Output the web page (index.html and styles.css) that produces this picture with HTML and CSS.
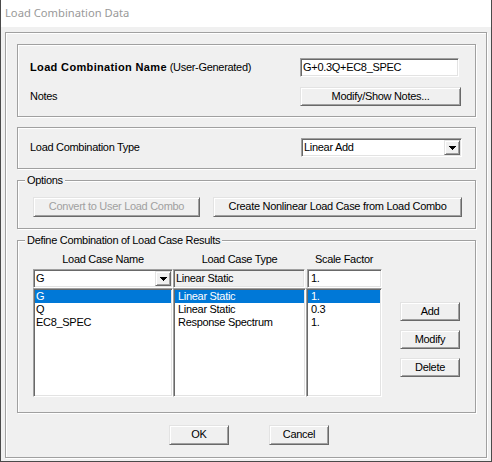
FILE: index.html
```html
<!DOCTYPE html>
<html>
<head>
<meta charset="utf-8">
<title>Load Combination Data</title>
<link rel="stylesheet" href="styles.css">
</head>
<body>
<div class="window">
  <div class="titlebar">Load Combination Data</div>
  <div class="client">
    <div class="frame">
      <div class="box box-name">
        <div class="label"><b class="strong">Load Combination Name</b> (User-Generated)</div>
        <div class="textbox tb-name">G+0.3Q+EC8_SPEC</div>
        <div class="label">Notes</div>
        <div class="btn btn-notes">Modify/Show Notes...</div>
      </div>
      <div class="box box-type">
        <div class="label">Load Combination Type</div>
        <div class="combo combo-type">
          <span class="combo-text">Linear Add</span>
          <span class="drop"><svg width="7" height="4" viewBox="0 0 7 4"><polygon points="0,0 7,0 3.5,4" fill="#000"/></svg></span>
        </div>
      </div>
      <div class="group group-options">
        <div class="group-title">Options</div>
        <div class="options-row">
          <div class="btn btn-convert disabled">Convert to User Load Combo</div>
          <div class="btn btn-create">Create Nonlinear Load Case from Load Combo</div>
        </div>
      </div>
      <div class="group group-define">
        <div class="group-title">Define Combination of Load Case Results</div>
        <div class="define-grid">
          <div class="hdr">Load Case Name</div>
          <div class="hdr">Load Case Type</div>
          <div class="hdr">Scale Factor</div>
          <div></div>

          <div class="combo combo-case">
            <span class="combo-text">G</span>
            <span class="drop"><svg width="7" height="4" viewBox="0 0 7 4"><polygon points="0,0 7,0 3.5,4" fill="#000"/></svg></span>
          </div>
          <div class="textbox readonly">Linear Static</div>
          <div class="textbox tb-scale">1.</div>
          <div></div>

          <div class="list list-name">
            <div class="item sel">G</div>
            <div class="item">Q</div>
            <div class="item">EC8_SPEC</div>
          </div>
          <div class="list list-type">
            <div class="item sel">Linear Static</div>
            <div class="item">Linear Static</div>
            <div class="item">Response Spectrum</div>
          </div>
          <div class="list list-scale">
            <div class="item sel">1.</div>
            <div class="item">0.3</div>
            <div class="item">1.</div>
          </div>
          <div class="side-buttons">
            <div class="btn btn-side">Add</div>
            <div class="btn btn-side">Modify</div>
            <div class="btn btn-side">Delete</div>
          </div>
        </div>
      </div>
      <div class="footer">
        <div class="btn btn-foot">OK</div>
        <div class="btn btn-foot">Cancel</div>
      </div>
    </div>
  </div>
</div>
</body>
</html>
```
FILE: styles.css
```css
* { box-sizing: border-box; }
html, body { margin: 0; padding: 0; }
body {
  width: 492px;
  height: 462px;
  overflow: hidden;
  background: #f0f0f0;
  font-family: "Liberation Sans", Arial, sans-serif;
  font-size: 11px;
  line-height: 13px;
  letter-spacing: -0.3px;
  color: #000;
}
.window {
  width: 492px;
  height: 462px;
  background: #f0f0f0;
  border: 1px solid #4a4a4a;
  border-top: none;
  display: flex;
  flex-direction: column;
}
.titlebar {
  height: 27px;
  flex: none;
  background: #fff;
  color: #999;
  font-family: "Noto Sans", "Open Sans", sans-serif;
  font-size: 11.2px;
  letter-spacing: 0;
  line-height: 25px;
  padding-left: 4px;
}
.client {
  flex: 1;
  padding: 5px 4px 3px 4px;
}
.frame {
  height: 100%;
  border: 1px solid #a0a0a0;
  box-shadow: inset 1px 1px #fff, 1px 1px #fff;
  padding: 11px 10px 0 11px;
  display: flex;
  flex-direction: column;
}

/* etched boxes */
.box, .group {
  border: 1px solid #a0a0a0;
  box-shadow: inset 1px 1px #fff, 1px 1px #fff;
}
.box-name {
  display: grid;
  grid-template-columns: 270px 161px;
  grid-template-rows: 19px 19px;
  row-gap: 10px;
  align-items: center;
  padding: 13px 0 10px 12px;
}
.box-type {
  margin-top: 10px;
  display: grid;
  grid-template-columns: 271px 161px;
  align-items: center;
  padding: 10px 0 11px 12px;
}
.label { white-space: nowrap; }
.strong { letter-spacing: 0.35px; }

.group {
  padding: 0 0 0 15px;
}
.group-title {
  width: max-content;
  margin: -7px 0 0 -8px;
  padding: 0 2px;
  background: #f0f0f0;
  line-height: 13px;
  height: 13px;
}
.group-options {
  margin-top: 11px;
  padding-bottom: 11px;
}
.options-row {
  margin-top: 10px;
  display: flex;
  gap: 13px;
}
.group-define {
  margin-top: 11px;
  padding-bottom: 15px;
}

/* controls */
.btn {
  height: 20px;
  border: 1px solid;
  border-color: #e3e3e3 #696969 #696969 #e3e3e3;
  box-shadow: inset 1px 1px #fff, inset -1px -1px #a0a0a0;
  background: #f0f0f0;
  text-align: center;
  line-height: 17px;
  white-space: nowrap;
}
.btn.disabled { color: #a0a0a0; }
.btn-notes { width: 161px; height: 19px; line-height: 16px; }
.btn-convert { width: 167px; }
.btn-create { width: 249px; }
.btn-side { width: 60px; height: 19px; line-height: 16px; }
.btn-foot { width: 60px; }

.textbox, .combo, .list {
  border: 1px solid;
  border-color: #a0a0a0 #fff #fff #a0a0a0;
  box-shadow: inset 1px 1px #696969, inset -1px -1px #e3e3e3;
  background: #fff;
}
.textbox {
  height: 19px;
  padding: 1px 2px;
  line-height: 15px;
  white-space: nowrap;
}
.tb-name { width: 159px; }
.readonly {
  width: 132px;
  background: #f0f0f0;
}
.tb-scale {
  width: 75px;
  margin-left: 1px;
  padding-left: 3px;
}
.combo {
  height: 19px;
  padding: 1px;
  display: flex;
}
.combo-text {
  flex: 1;
  padding-left: 1px;
  line-height: 15px;
  white-space: nowrap;
}
.drop {
  width: 16px;
  height: 15px;
  flex: none;
  border: 1px solid;
  border-color: #e3e3e3 #696969 #696969 #e3e3e3;
  box-shadow: inset 1px 1px #fff, inset -1px -1px #a0a0a0;
  background: #f0f0f0;
  display: flex;
  align-items: center;
  justify-content: center;
}
.drop svg { display: block; shape-rendering: crispEdges; }

/* define grid */
.define-grid {
  margin-top: 6px;
  display: grid;
  grid-template-columns: 140px 133px 76px 79px;
  grid-template-rows: 13px 22px 109px;
}
.hdr {
  text-align: center;
  white-space: nowrap;
}
.define-grid .combo, .define-grid .textbox { margin-top: 3px; }
.list {
  height: 109px;
  padding: 1px;
}
.item {
  height: 13px;
  line-height: 13px;
  white-space: nowrap;
  padding-left: 1px;
}
.list-type .item, .list-scale .item { padding-left: 3px; }
.item.sel {
  background: #0078d7;
  color: #fff;
}
.side-buttons {
  padding: 14px 0 0 18px;
  display: flex;
  flex-direction: column;
  gap: 9px;
}

.footer {
  margin-top: 12px;
  display: flex;
  gap: 40px;
  padding-left: 152px;
}
```
